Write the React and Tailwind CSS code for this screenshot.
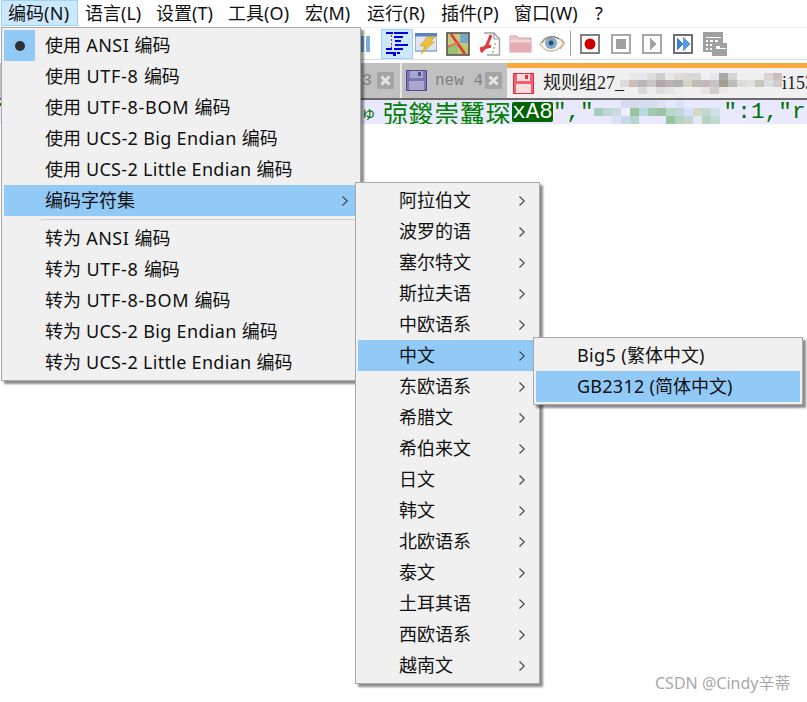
import React from "react";

const UI = { fontFamily: '"Noto Sans","Noto Sans CJK SC",sans-serif' };

const topMenu = [
  ["编码(N)", "w-[77px]", "tracking-[0.3px]"],
  ["语言(L)", "w-[71px]", ""],
  ["设置(T)", "w-[72px]", "tracking-[0.1px]"],
  ["工具(O)", "w-[77px]", "tracking-[0.1px]"],
  ["宏(M)", "w-[62px]", ""],
  ["运行(R)", "w-[74px]", ""],
  ["插件(P)", "w-[73px]", ""],
  ["窗口(W)", "w-[81px]", ""],
  ["?", "w-[30px]", ""],
];

const useRows = [
  ["使用 UTF-8 编码", "tracking-[0.7px]"],
  ["使用 UTF-8-BOM 编码", "tracking-[0.7px]"],
  ["使用 UCS-2 Big Endian 编码", "tracking-[0.33px]"],
  ["使用 UCS-2 Little Endian 编码", "tracking-[0.3px]"],
];
const convertRows = [
  ["转为 ANSI 编码", "tracking-[0.5px]"],
  ["转为 UTF-8 编码", "tracking-[0.7px]"],
  ["转为 UTF-8-BOM 编码", "tracking-[0.7px]"],
  ["转为 UCS-2 Big Endian 编码", "tracking-[0.33px]"],
  ["转为 UCS-2 Little Endian 编码", "tracking-[0.3px]"],
];
const charsets = ["阿拉伯文", "波罗的语", "塞尔特文", "斯拉夫语", "中欧语系", "中文", "东欧语系", "希腊文", "希伯来文", "日文", "韩文", "北欧语系", "泰文", "土耳其语", "西欧语系", "越南文"];

function Chevron({ className }) {
  return (
    <svg viewBox="0 0 6 10" className={`h-[10px] w-[6px] shrink-0 ${className}`} fill="none" stroke="#404040" strokeWidth="1.1">
      <path d="M0.5 0.5 L5.2 5 L0.5 9.5" />
    </svg>
  );
}

function Label({ text, latin = "" }) {
  const parts = text.split(/([\u4e00-\u9fff]+)/).filter(Boolean);
  return (
    <span>
      {parts.map((p, i) => (
        <span key={i} className={/[\u4e00-\u9fff]/.test(p) ? "" : latin}>{p}</span>
      ))}
    </span>
  );
}

function Row({ label, active, arrow, latin }) {
  return (
    <div className={`flex h-[31px] items-center pl-[41px] text-[18px] leading-[31px] whitespace-pre text-[#101010] ${active ? "bg-[#91c9f7]" : ""}`}>
      <Label text={label} latin={latin} />
      {arrow && <Chevron className={`ml-auto ${arrow}`} />}
    </div>
  );
}

function Mosaic({ rows, size = 9, h = 7, className }) {
  return (
    <svg className={className} width={rows[0].length * size} height={rows.length * h} viewBox={`0 0 ${rows[0].length * size} ${rows.length * h}`} shapeRendering="crispEdges">
      {rows.map((r, y) => r.map((c, x) => (c ? <rect key={`${x}-${y}`} x={x * size} y={y * h} width={size} height={h} fill={c} /> : null)))}
    </svg>
  );
}

const tabMosaic = [
  [0, "#e8e8e8", "#e4e8ec", "#dcdcdc", "#d0ccca", "#e8e8e8", "#e0dcd8", "#dcd8d4", "#d8d8d8", "#f0f0f0", "#e4e8ea", "#a8a8ac", "#d4d4d4", 0, 0, 0, "#dcd4d0", "#c8c0bc"],
  ["#dcdcdc", "#c8bdb8", "#b8b6b8", "#c8c4c4", "#b0a8ac", "#bcb4b4", "#b0b0b0", "#d4d4c8", "#c0bcb4", "#c4b8bc", "#c8c4c8", "#a89c90", "#bcbcb8", "#dcdcd8", "#e0e0dc", "#c8c4c0", "#dce0e4", "#d0ccd0"],
  [0, 0, "#dcd8d8", "#ececec", "#dedede", "#e4e4e4", "#ececec", 0, 0, "#e8e4e4", "#d0ccc8", "#ece8e4", 0, 0, 0, 0, 0, 0],
];

const codeMosaic = [
  [0, 0, 0, "#d8d8ee", "#d8d8ec", "#d0e0f0", "#d8dcec", "#e0e0f8", "#e8e8ff", "#d8e4f0", "#e8e8ff", "#e8e8ff", "#e8e8ff", "#e8e8ff"],
  ["#a8ccbc", "#bcd8d0", "#c8dce0", "#eef0ff", "#98c4a0", "#bcd8dc", "#a4c8ac", "#9cc4a4", "#b8d8c8", "#c4d4dc", "#d4e0ff", "#d4d8c8", "#c0d8d0", "#d0e0e8"],
  [0, 0, "#dce0f4", "#c8d8e8", "#b8d4cc", "#e8e8ff", "#e8e8ff", "#e8e8ff", "#98c4a0", "#b4d4c0", "#c0d8cc", "#e4e8f4", "#b4d4c0", "#c0dcd0"],
];

function DocMapIcon() {
  return (
    <svg width="24" height="24" viewBox="0 0 24 24" shapeRendering="crispEdges" fill="#0000e0">
      <rect x="1" y="0" width="7" height="2" /><rect x="9" y="0" width="14" height="2" />
      <rect x="9" y="4" width="9" height="2" /><rect x="10" y="8" width="6" height="2" />
      <rect x="10" y="12" width="13" height="2" /><rect x="9" y="16" width="9" height="2" />
      <rect x="1" y="16" width="6" height="2" /><rect x="1" y="20" width="10" height="2" /><rect x="12" y="20" width="3" height="2" />
      <rect x="8" y="22" width="3" height="2" />
      <path fill="#e02020" d="M6 3h1v2H6zM6 7h1v2H6zM6 11h1v2H6zM6 14h1v2H6z" />
    </svg>
  );
}

function BoltIcon() {
  return (
    <svg width="22" height="22" viewBox="0 0 22 22">
      <rect x="0" y="0" width="22" height="18" fill="#dfe6f0" stroke="#5c84bc" />
      <rect x="0" y="0" width="22" height="3.5" fill="#5c84bc" />
      <path d="M12 4 H20 L15 9 H19 L6 21 L10 13 H5 Z" fill="#eec040" stroke="#c89820" strokeWidth="0.6" />
    </svg>
  );
}

function MapIcon() {
  return (
    <svg width="24" height="24" viewBox="0 0 24 24">
      <rect x="1" y="1" width="22" height="22" fill="#c8c880" stroke="#505050" strokeWidth="1.6" />
      <path d="M14 2h8v9h-8z" fill="#78a8c8" />
      <path d="M2 13h10v9H2z" fill="#98c070" />
      <path d="M13 14h9v8h-9z" fill="#b8c868" />
      <path d="M5 2 L19 22" stroke="#e03838" strokeWidth="2.6" />
      <path d="M2 15 L13 10" stroke="#e06858" strokeWidth="1.4" />
    </svg>
  );
}

function PdfIcon() {
  return (
    <svg width="22" height="24" viewBox="0 0 22 24" fill="none">
      <path d="M5 1 H15 L20.5 7 V23 H8" stroke="#a0a0a0" strokeWidth="1.4" fill="#fafafa" />
      <path d="M15 1 V7 H20.5" stroke="#a0a0a0" strokeWidth="1.2" />
      <path d="M12 3 L8 13 L2 20" stroke="#e03840" strokeWidth="3" />
      <path d="M1 17 L12 14" stroke="#e03840" strokeWidth="3" />
      <path d="M16 11v2M15 15v2M13 20h2" stroke="#8cb890" strokeWidth="1.4" />
    </svg>
  );
}

function FolderIcon() {
  return (
    <svg width="23" height="19" viewBox="0 0 23 19">
      <path d="M1 2 H8 L10 4 H22 V18 H1 Z" fill="#ecc4c8" stroke="#d49ca2" />
      <path d="M1 7 H22" stroke="#f4dcde" strokeWidth="1.5" />
      <path d="M2 9 H21 V17 H2 Z" fill="#e4acb2" />
    </svg>
  );
}

function EyeIcon() {
  return (
    <svg width="26" height="20" viewBox="0 0 26 20">
      <path d="M1 10 C6 1 18 0 25 9 C19 19 7 20 1 10 Z" fill="#f4f4ec" stroke="#c8c0a0" strokeWidth="1.4" />
      <path d="M22 5 L25 9 L21 15" stroke="#d8a890" strokeWidth="1.6" fill="none" />
      <circle cx="12" cy="9" r="6" fill="#84a8cc" />
      <circle cx="12" cy="9" r="2.4" fill="#304868" />
      <path d="M3 9 C7 2 15 1 20 5" stroke="#707060" strokeWidth="1" fill="none" />
    </svg>
  );
}

function Frame({ color, children }) {
  return (
    <svg width="20" height="20" viewBox="0 0 20 20" shapeRendering="crispEdges">
      <rect x="1" y="1" width="18" height="18" fill="#fff" stroke={color} strokeWidth="2" />
      {children}
    </svg>
  );
}

function TableIcon() {
  return (
    <svg width="24" height="24" viewBox="0 0 24 24" shapeRendering="crispEdges">
      <rect x="0" y="0" width="20" height="20" fill="#a0a0a0" />
      <path fill="#fff" d="M3 5h15v1H3zM3 8h2v2H3zM7 8h3v2H7zM12 8h3v2h-3zM3 12h2v2H3zM7 12h3v2H7zM3 16h2v2H3zM7 16h3v2H7z" />
      <rect x="9" y="11" width="15" height="13" fill="#a0a0a0" />
      <path fill="#fff" d="M13 14h4v2h6v1H13z" />
    </svg>
  );
}

function SaveIcon({ body, light, dark }) {
  return (
    <svg width="21" height="21" viewBox="0 0 21 21" shapeRendering="crispEdges" className="shrink-0">
      <rect x="0.5" y="0.5" width="20" height="20" fill={body} stroke={dark} />
      <rect x="4" y="1" width="13" height="7" fill={light} />
      <rect x="12" y="2" width="3" height="4" fill={dark} />
      <rect x="3" y="11" width="15" height="9" fill={light} />
    </svg>
  );
}

function CloseBox() {
  return (
    <svg width="17" height="17" viewBox="0 0 17 17" className="shrink-0">
      <rect width="17" height="17" fill="#a4a4a4" rx="1" />
      <path d="M4.5 4.5 L12.5 12.5 M12.5 4.5 L4.5 12.5" stroke="#e4e4e4" strokeWidth="3" />
    </svg>
  );
}

export default function App() {
  return (
    <div className="relative h-[702px] w-[807px] overflow-hidden bg-white" style={UI}>
      {/* Menu bar */}
      <div className="flex h-[27px] pl-[1px] text-[18px] leading-[25px] whitespace-pre text-[#101010]">
        {topMenu.map(([label, w, latin], i) => (
          <div key={label} className={`${w} h-[26px] border pl-[6px] ${i === 0 ? "border-[#99d1ff] bg-[#cce8ff]" : "border-transparent"}`}>
            <Label text={label} latin={latin} />
          </div>
        ))}
      </div>

      {/* Toolbar */}
      <div className="flex h-[33px] items-center border-t border-b border-t-[#f0f0f0] border-b-[#dcdcdc] pl-[361px]">
        <div className="flex h-[16px] w-[9px] gap-[2px] self-center">
          <div className="w-[3px] bg-[#7aaee0]" />
          <div className="w-[4px] bg-[#7aaee0]" />
        </div>
        <div className="ml-[11px] flex h-[30px] w-[32px] items-center justify-center border border-[#99d1ff] bg-[#cce8ff]">
          <DocMapIcon />
        </div>
        <div className="ml-[2px]"><BoltIcon /></div>
        <div className="ml-[9px]"><MapIcon /></div>
        <div className="ml-[9px]"><PdfIcon /></div>
        <div className="ml-[8px]"><FolderIcon /></div>
        <div className="ml-[7px]"><EyeIcon /></div>
        <div className="ml-[5px] h-[25px] w-[1px] bg-[#a0a0a0]" />
        <div className="ml-[9px]">
          <Frame color="#808080"><circle cx="10" cy="10" r="5.5" fill="#cc0000" shapeRendering="auto" /></Frame>
        </div>
        <div className="ml-[11px]">
          <Frame color="#a8a8a8"><rect x="5" y="5" width="10" height="10" fill="#a0a0a0" /></Frame>
        </div>
        <div className="ml-[11px]">
          <Frame color="#a8a8a8"><path d="M8 4 L15 10 L8 16 Z" fill="#a0a0a0" /></Frame>
        </div>
        <div className="ml-[11px]">
          <Frame color="#707070">
            <path d="M4 3 L10 10 L4 17 Z" fill="#4080d8" /><path d="M10 3 L17 10 L10 17 Z" fill="#5c98e8" />
          </Frame>
        </div>
        <div className="ml-[10px]"><TableIcon /></div>
      </div>

      {/* Tab bar */}
      <div className="flex h-[38px] items-end bg-white">
        <div className="flex h-[35px] w-[400px] shrink-0 items-center justify-end bg-[#c0c0c0] pr-[6px]" style={{ fontFamily: '"Liberation Mono",monospace' }}>
          <span className="mr-[5px] text-[17px] text-[#808080]">3</span>
          <CloseBox />
        </div>
        <div className="h-[35px] w-[2px] shrink-0 bg-[#e8e8e8]" />
        <div className="flex h-[35px] w-[105px] shrink-0 items-center bg-[#c0c0c0] pl-[4px]">
          <SaveIcon body="#7878b8" light="#a8a8cc" dark="#50508c" />
          <span className="ml-[8px] w-[50px] shrink-0 text-[16px] whitespace-pre text-[#808080]" style={{ fontFamily: '"Liberation Mono",monospace' }}>new 4</span>
          <CloseBox />
        </div>
        <div className="flex h-[35px] w-[300px] shrink-0 items-center overflow-hidden border-t-[5px] border-[#faa83c] bg-[#f0f0f0] pl-[6px]">
          <SaveIcon body="#f06070" light="#fcdcdc" dark="#e03040" />
          <span className="ml-[9px] shrink-0 text-[18px] whitespace-pre text-[#202020]" style={{ fontFamily: '"Liberation Serif","Noto Sans CJK SC",serif' }}>规则组27_</span>
          <Mosaic rows={tabMosaic} className="ml-[-4px] shrink-0" />
          <span className="shrink-0 text-[18px] whitespace-pre text-[#202020]" style={{ fontFamily: '"Liberation Serif",serif' }}>i153</span>
        </div>
      </div>
      <div className="h-[2px] bg-[#6a6a6a]" />

      {/* Code line */}
      <div className="flex h-[24px] items-center overflow-hidden bg-[#e8e8ff] pl-[361px] text-[22.5px] leading-[24px] whitespace-pre text-[#007000]" style={{ fontFamily: '"Liberation Mono","Noto Sans CJK SC",monospace' }}>
        <span className="w-[22px] shrink-0 text-[15px]" style={{ fontFamily: '"Noto Sans CJK JP",sans-serif' }}>ゅ</span>
        <span className="w-[129px] shrink-0 text-[25px] tracking-[0.6px] text-[#008000]" style={{ fontFamily: '"Noto Sans CJK SC",sans-serif' }}>弶鍐崇蠶琛</span>
        <span className="flex h-[20px] w-[41px] shrink-0 items-center justify-center rounded-[2px] bg-[#006400] text-white">xA8</span>
        <span className="shrink-0">","</span>
        <Mosaic rows={codeMosaic} className="shrink-0" h={8} />
        <span className="ml-[4px] shrink-0 tracking-[0.2px]">":1,"ru</span>
      </div>

      {/* Gutter mark left of the menu */}
      <div className="absolute top-[103px] left-0 h-[3px] w-[1px] bg-[#008000]" />

      {/* Main encoding menu */}
      <div className="absolute top-[27px] left-[1px] w-[360px] border border-[#a8a8a8] bg-[#f0f0f0] p-[2px] shadow-[3px_3px_2px_rgba(0,0,0,0.45)]">
        <div className="flex h-[31px] items-center">
          <div className="flex h-[31px] w-[31px] items-center justify-center bg-[#91c9f7]">
            <div className="h-[10px] w-[10px] rounded-full bg-[#303030]" />
          </div>
          <span className="ml-[10px] text-[18px] whitespace-pre text-[#101010]"><Label text="使用 ANSI 编码" latin="tracking-[0.5px]" /></span>
        </div>
        {useRows.map(([r, t]) => <Row key={r} label={r} latin={t} />)}
        <Row label="编码字符集" active arrow="mr-[10px]" />
        <div className="flex h-[7px] items-center pl-[37px]">
          <div className="h-[1px] w-full bg-[#d0d0d0]" />
        </div>
        {convertRows.map(([r, t]) => <Row key={r} label={r} latin={t} />)}
      </div>

      {/* Charset submenu */}
      <div className="absolute top-[182px] left-[355px] w-[185px] border border-[#a8a8a8] bg-[#f0f0f0] p-[2px] shadow-[3px_3px_2px_rgba(0,0,0,0.45)]">
        {charsets.map((c) => <Row key={c} label={c} active={c === "中文"} arrow="mr-[12px]" />)}
      </div>

      {/* Chinese submenu */}
      <div className="absolute top-[337px] left-[533px] w-[270px] border border-[#a8a8a8] bg-[#f0f0f0] p-[2px] shadow-[3px_3px_2px_rgba(0,0,0,0.45)]">
        <Row label="Big5 (繁体中文)" latin="tracking-[0.35px]" />
        <Row label="GB2312 (简体中文)" active latin="tracking-[0.25px]" />
      </div>

      {/* Watermark */}
      <div className="absolute top-[672px] left-[655px] text-[16px] leading-[22px] whitespace-pre text-[#a8a8a8]">CSDN @Cindy辛蒂</div>
    </div>
  );
}
